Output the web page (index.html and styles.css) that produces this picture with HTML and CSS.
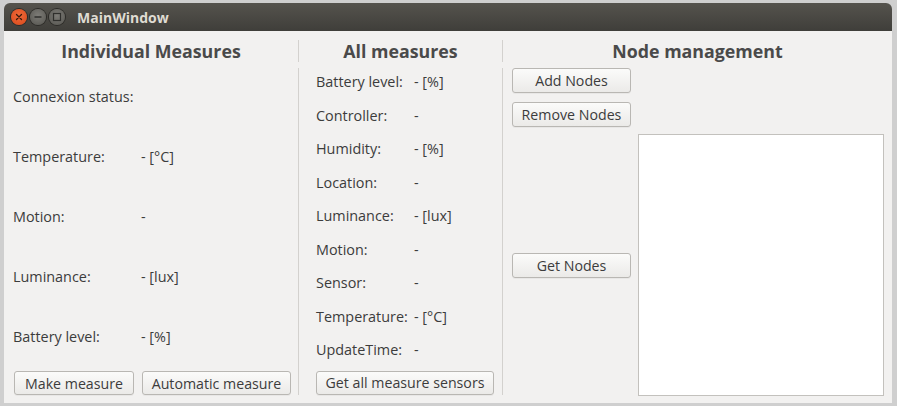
FILE: index.html
```html
<!DOCTYPE html>
<html>
<head>
<meta charset="utf-8">
<link rel="stylesheet" href="styles.css">
</head>
<body>
<div class="window">
  <div class="titlebar">
    <div class="wbtns">
      <span class="wbtn close"><svg width="16" height="16" viewBox="0 0 16 16"><path d="M5.5 5.5 L10.5 10.5 M10.5 5.5 L5.5 10.5" stroke="#3a1a0c" stroke-width="1.3" stroke-linecap="round"/></svg></span>
      <span class="wbtn"><svg width="16" height="16" viewBox="0 0 16 16"><path d="M4.5 8 H11.5" stroke="#2f2f2c" stroke-width="1.3"/></svg></span>
      <span class="wbtn"><svg width="16" height="16" viewBox="0 0 16 16"><rect x="4.5" y="4.5" width="7" height="7" fill="none" stroke="#2f2f2c" stroke-width="1.2"/></svg></span>
    </div>
    <span class="title">MainWindow</span>
  </div>
  <div class="content">
    <section class="col col1">
      <h2 class="head">Individual Measures</h2>
      <div class="rows rows-wide">
        <div class="row"><span class="lab">Connexion status:</span><span class="val"></span></div>
        <div class="row"><span class="lab">Temperature:</span><span class="val">- [°C]</span></div>
        <div class="row"><span class="lab">Motion:</span><span class="val">-</span></div>
        <div class="row"><span class="lab">Luminance:</span><span class="val">- [lux]</span></div>
        <div class="row"><span class="lab">Battery level:</span><span class="val">- [%]</span></div>
      </div>
      <div class="btnrow">
        <button class="btn b-make">Make measure</button>
        <button class="btn b-auto">Automatic measure</button>
      </div>
    </section>
    <div class="sep"><span class="seg top"></span><span class="seg bottom"></span></div>
    <section class="col col2">
      <h2 class="head">All measures</h2>
      <div class="rows rows-tight">
        <div class="row"><span class="lab2">Battery level:</span><span class="val2">- [%]</span></div>
        <div class="row"><span class="lab2">Controller:</span><span class="val2">-</span></div>
        <div class="row"><span class="lab2">Humidity:</span><span class="val2">- [%]</span></div>
        <div class="row"><span class="lab2">Location:</span><span class="val2">-</span></div>
        <div class="row"><span class="lab2">Luminance:</span><span class="val2">- [lux]</span></div>
        <div class="row"><span class="lab2">Motion:</span><span class="val2">-</span></div>
        <div class="row"><span class="lab2">Sensor:</span><span class="val2">-</span></div>
        <div class="row"><span class="lab2">Temperature:</span><span class="val2">- [°C]</span></div>
        <div class="row"><span class="lab2">UpdateTime:</span><span class="val2">-</span></div>
      </div>
      <div class="btnrow2">
        <button class="btn b-all">Get all measure sensors</button>
      </div>
    </section>
    <div class="sep"><span class="seg top"></span><span class="seg bottom"></span></div>
    <section class="col col3">
      <h2 class="head">Node management</h2>
      <div class="nodes">
        <div class="nodebtns">
          <button class="btn b-node">Add Nodes</button>
          <button class="btn b-node">Remove Nodes</button>
        </div>
        <div class="nodelist-row">
          <div class="getwrap"><button class="btn b-node">Get Nodes</button></div>
          <div class="listbox"></div>
        </div>
      </div>
    </section>
  </div>
</div>
</body>
</html>
```

FILE: styles.css
```css
* { box-sizing: border-box; }
html, body { margin: 0; padding: 0; }
body {
  width: 897px;
  height: 406px;
  overflow: hidden;
  background: #cfcfcf;
  padding: 3px 5px 0 4px;
  font-family: "Open Sans", "DejaVu Sans", sans-serif;
  color: #3c3c3c;
}
.window {
  width: 888px;
  height: 400px;
  display: flex;
  flex-direction: column;
  border-radius: 6px 6px 0 0;
  overflow: hidden;
}
.titlebar {
  height: 28px;
  flex: none;
  background: linear-gradient(#55534d, #3f3e3a);
  display: flex;
  align-items: center;
  padding-left: 7px;
}
.wbtns { display: flex; gap: 3px; }
.wbtn {
  width: 16px; height: 16px; border-radius: 50%;
  background: radial-gradient(circle at 50% 40%, #7d7c77, #55544f);
  box-shadow: 0 0 0 1px #2c2b28;
  display: block;
}
.wbtn svg { display: block; }
.wbtn.close { background: radial-gradient(circle at 50% 40%, #f06a3a, #d8481a); }
.title {
  margin-left: 12px;
  color: #dfdbd2;
  font-weight: bold;
  font-size: 14px;
}
.content {
  flex: 1;
  background: #f2f1f0;
  display: flex;
}
.col { display: flex; flex-direction: column; }
.col1 { width: 294px; }
.col2 { width: 203px; }
.col3 { flex: 1; }
.head {
  margin: 0;
  height: 36px;
  display: flex;
  align-items: center;
  justify-content: center;
  font-size: 17.8px;
  font-weight: bold;
  color: #4a4a4a;
  padding-top: 4px;
}
.sep {
  width: 1px;
  display: flex;
  flex-direction: column;
}
.seg { display: block; width: 1px; background: #d3d1ce; }
.seg.top { margin-top: 9px; height: 22px; }
.seg.bottom { margin-top: 6px; height: 327px; }
.rows { display: flex; flex-direction: column; font-size: 14.4px; }
.rows-wide { padding-left: 9px; margin-top: -1px; }
.rows-wide .row { height: 60px; display: flex; align-items: center; }
.lab { width: 128px; }
.rows-tight { padding-left: 17px; margin-top: -2px; }
.rows-tight .row { height: 33.5px; display: flex; align-items: center; }
.lab2 { width: 98px; }
.btn {
  font-family: inherit;
  font-size: 14.2px;
  color: #3c3c3c;
  height: 24px;
  padding: 0 4px;
  border: 1px solid #b9b7b3;
  border-radius: 3px;
  background: linear-gradient(#fbfbfa, #ebeae8);
  box-shadow: 0 1px 0 rgba(0,0,0,0.04);
  display: flex;
  align-items: center;
  justify-content: center;
  white-space: nowrap;
}
.btnrow { display: flex; gap: 8px; padding-left: 10px; margin-top: 5px; }
.b-make { width: 120px; }
.b-auto { width: 149px; }
.btnrow2 { padding-left: 17px; margin-top: 4px; }
.b-all { width: 178px; }
.nodes { display: flex; flex-direction: column; padding-left: 9px; }
.nodebtns { display: flex; flex-direction: column; gap: 9px; margin-top: 1px; }
.b-node { width: 119px; height: 25px; }
.nodelist-row { display: flex; margin-top: 7px; gap: 7px; }
.getwrap { display: flex; align-items: center; }
.listbox {
  width: 246px;
  height: 262px;
  background: #ffffff;
  border: 1px solid #c3c1bd;
}
```
